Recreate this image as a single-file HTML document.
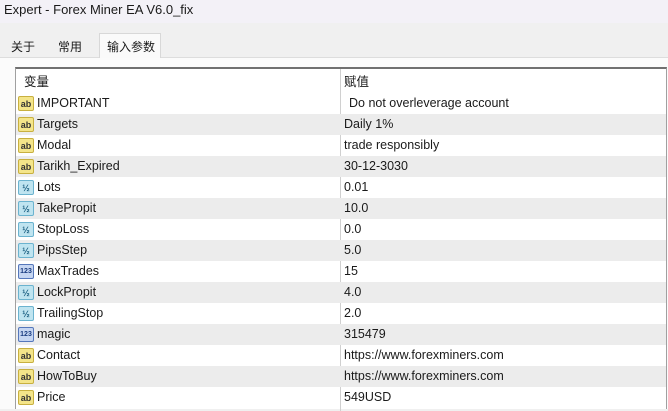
<!DOCTYPE html>
<html><head><meta charset="utf-8"><style>
*{margin:0;padding:0;box-sizing:border-box}
body{width:668px;height:409px;overflow:hidden;background:#f0f0f0;font-family:"Liberation Sans","Noto Sans CJK SC",sans-serif;font-size:12.5px;color:#1a1a1a;position:relative}
.title{position:absolute;left:0;top:0;width:668px;height:23px;background:#f3f1f7;padding:2px 0 0 4px;font-size:13px}
.tab{position:absolute;top:35px;height:23px;padding:3px 0 0 0;font-size:12px}
.tabsel{position:absolute;left:99px;top:33px;width:62px;height:25px;background:#fafafa;border:1px solid #d8d8d8;border-bottom:none;padding:4px 0 0 7px;font-size:12px}
.panel{position:absolute;left:0;top:57px;width:668px;height:352px;background:#fbfbfb;border-top:1px solid #ddd}
.list{position:absolute;left:15px;top:67px;width:652px;height:342px;background:#fff;border-top:2px solid #707070;border-left:1px solid #a0a0a0;border-right:1px solid #a0a0a0}
.row{position:absolute;left:0;width:650px;height:21px}
.row.g{background:#ececec}
.row .n{position:absolute;left:21px;top:3px}
.row .v{position:absolute;left:328px;top:3px}
.div{position:absolute;left:324px;top:0;width:1px;height:342px;background:#d0d0d0}
.ic{position:absolute;left:2px;top:3px;width:16px;height:15px;border-radius:2px;font-size:9px;line-height:14px;text-align:center;font-weight:bold}
.ab{background:#f4e58a;border:1px solid #c8b040;color:#333}
.hf{background:#bfe4f0;border:1px solid #6bb3cf;color:#1a5e80}
.nm{background:#c6d6f2;border:1px solid #5577bb;color:#1a3c80;font-size:7px}
</style></head><body>
<div class="title">Expert - Forex Miner EA V6.0_fix</div>
<div class="tab" style="left:11px">关于</div>
<div class="tab" style="left:58px">常用</div>
<div class="panel"></div>
<div class="tabsel">输入参数</div>
<div class="list">
<div class="div"></div>
<div class="row" style="top:0;height:24px"><span class="n" style="left:8px;top:2px">变量</span><span class="v" style="top:2px">赋值</span></div>
<div class="row" style="top:24px"><span class="ic ab">ab</span><span class="n">IMPORTANT</span><span class="v" style="left:333px">Do not overleverage account</span></div>
<div class="row g" style="top:45px"><span class="ic ab">ab</span><span class="n">Targets</span><span class="v">Daily 1%</span></div>
<div class="row" style="top:66px"><span class="ic ab">ab</span><span class="n">Modal</span><span class="v">trade responsibly</span></div>
<div class="row g" style="top:87px"><span class="ic ab">ab</span><span class="n">Tarikh_Expired</span><span class="v">30-12-3030</span></div>
<div class="row" style="top:108px"><span class="ic hf">½</span><span class="n">Lots</span><span class="v">0.01</span></div>
<div class="row g" style="top:129px"><span class="ic hf">½</span><span class="n">TakePropit</span><span class="v">10.0</span></div>
<div class="row" style="top:150px"><span class="ic hf">½</span><span class="n">StopLoss</span><span class="v">0.0</span></div>
<div class="row g" style="top:171px"><span class="ic hf">½</span><span class="n">PipsStep</span><span class="v">5.0</span></div>
<div class="row" style="top:192px"><span class="ic nm">123</span><span class="n">MaxTrades</span><span class="v">15</span></div>
<div class="row g" style="top:213px"><span class="ic hf">½</span><span class="n">LockPropit</span><span class="v">4.0</span></div>
<div class="row" style="top:234px"><span class="ic hf">½</span><span class="n">TrailingStop</span><span class="v">2.0</span></div>
<div class="row g" style="top:255px"><span class="ic nm">123</span><span class="n">magic</span><span class="v">315479</span></div>
<div class="row" style="top:276px"><span class="ic ab">ab</span><span class="n">Contact</span><span class="v">https://www.forexminers.com</span></div>
<div class="row g" style="top:297px"><span class="ic ab">ab</span><span class="n">HowToBuy</span><span class="v">https://www.forexminers.com</span></div>
<div class="row" style="top:318px"><span class="ic ab">ab</span><span class="n">Price</span><span class="v">549USD</span></div>
</div>
</body></html>
